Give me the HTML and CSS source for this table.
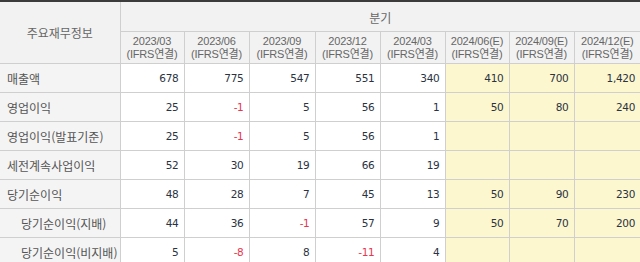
FILE: index.html
```html
<!DOCTYPE html>
<html lang="ko">
<head>
<meta charset="utf-8">
<link rel="stylesheet" href="styles.css">
</head>
<body>
<table class="fin">
  <colgroup>
    <col class="c-label">
    <col class="c-a"><col class="c-b"><col class="c-c"><col class="c-d"><col class="c-e"><col class="c-f"><col class="c-g"><col class="c-h">
  </colgroup>
  <thead>
    <tr class="h1">
      <th rowspan="2" class="corner">주요재무정보</th>
      <th colspan="8" class="period">분기</th>
    </tr>
    <tr class="h2">
      <th>2023/03<br>(IFRS연결)</th>
      <th>2023/06<br>(IFRS연결)</th>
      <th>2023/09<br>(IFRS연결)</th>
      <th>2023/12<br>(IFRS연결)</th>
      <th>2024/03<br>(IFRS연결)</th>
      <th>2024/06(E)<br>(IFRS연결)</th>
      <th>2024/09(E)<br>(IFRS연결)</th>
      <th>2024/12(E)<br>(IFRS연결)</th>
    </tr>
  </thead>
  <tbody>
    <tr>
      <th class="lbl">매출액</th>
      <td>678</td><td>775</td><td>547</td><td>551</td><td>340</td>
      <td class="est">410</td><td class="est">700</td><td class="est">1,420</td>
    </tr>
    <tr>
      <th class="lbl">영업이익</th>
      <td>25</td><td class="neg">-1</td><td>5</td><td>56</td><td>1</td>
      <td class="est">50</td><td class="est">80</td><td class="est">240</td>
    </tr>
    <tr>
      <th class="lbl">영업이익(발표기준)</th>
      <td>25</td><td class="neg">-1</td><td>5</td><td>56</td><td>1</td>
      <td class="est"></td><td class="est"></td><td class="est"></td>
    </tr>
    <tr>
      <th class="lbl">세전계속사업이익</th>
      <td>52</td><td>30</td><td>19</td><td>66</td><td>19</td>
      <td class="est"></td><td class="est"></td><td class="est"></td>
    </tr>
    <tr>
      <th class="lbl">당기순이익</th>
      <td>48</td><td>28</td><td>7</td><td>45</td><td>13</td>
      <td class="est">50</td><td class="est">90</td><td class="est">230</td>
    </tr>
    <tr>
      <th class="lbl sub">당기순이익(지배)</th>
      <td>44</td><td>36</td><td class="neg">-1</td><td>57</td><td>9</td>
      <td class="est">50</td><td class="est">70</td><td class="est">200</td>
    </tr>
    <tr>
      <th class="lbl sub">당기순이익(비지배)</th>
      <td>5</td><td class="neg">-8</td><td>8</td><td class="neg">-11</td><td>4</td>
      <td class="est"></td><td class="est"></td><td class="est"></td>
    </tr>
  </tbody>
</table>
</body>
</html>
```

FILE: styles.css
```css
html, body {
  margin: 0;
  padding: 0;
  background: #ffffff;
}

.fin {
  border-collapse: collapse;
  table-layout: fixed;
  width: 640px;
  border-top: 2px solid #3c3c3c;
  font-family: "Noto Sans CJK KR", "DejaVu Sans", sans-serif;
  font-size: 11px;
}

.c-label { width: 120px; }
.c-a { width: 64px; }
.c-b { width: 65px; }
.c-c { width: 66px; }
.c-d { width: 65px; }
.c-e { width: 65px; }
.c-f { width: 64px; }
.c-g { width: 65px; }
.c-h { width: 66px; }

.fin th,
.fin td {
  border: 1px solid #cfcfcf;
  padding: 0;
}

.fin tr > :first-child { border-left: none; }
.fin tr > :last-child { border-right: none; }

.fin thead th {
  background: #f2f2f2;
  color: #666666;
  font-weight: normal;
  text-align: center;
}

.h1 th { height: 27px; }
.h1 .period { padding-top: 2px; vertical-align: middle; font-size: 12px; }
.corner { font-size: 12px; padding-top: 4px; }

.h2 th {
  height: 30px;
  font-size: 11px;
  line-height: 13px;
  padding-top: 1px;
  font-family: "Liberation Sans", "Noto Sans CJK KR", sans-serif;
  letter-spacing: -0.2px;
}

.fin tbody th.lbl {
  background: #f4f4f4;
  color: #555555;
  font-weight: normal;
  text-align: left;
  padding-left: 7px;
  font-size: 12px;
  height: 28px;
  white-space: nowrap;
}

.fin tbody th.sub { padding-left: 21px; }

.fin tbody td {
  height: 28px;
  text-align: right;
  padding-right: 5px;
  color: #2b3342;
  font-family: "DejaVu Sans", sans-serif;
  font-size: 10.5px;
  letter-spacing: -0.3px;
}

.fin tbody td.neg { color: #e8364f; }

.fin tbody td.est { background: #fdf7cf; }
```
